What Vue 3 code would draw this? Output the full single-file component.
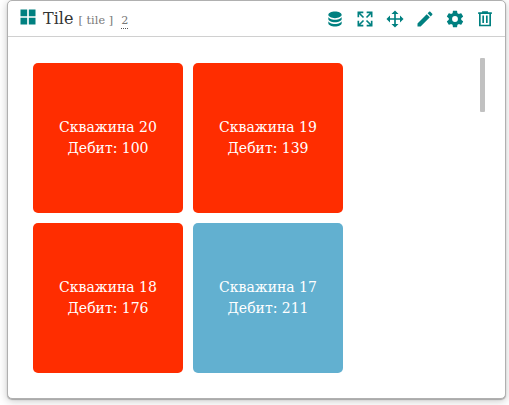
<script setup>
const actions = [
  { name: 'data', d: 'M12 3C7.58 3 4 4.79 4 7s3.58 4 8 4 8-1.79 8-4-3.58-4-8-4M4 9v3c0 2.21 3.58 4 8 4s8-1.79 8-4V9c0 2.21-3.58 4-8 4s-8-1.79-8-4m0 5v3c0 2.21 3.58 4 8 4s8-1.79 8-4v-3c0 2.21-3.58 4-8 4s-8-1.79-8-4z' },
  { name: 'expand', d: 'M9.5 13.09l1.41 1.41-4.5 4.5H10v2H3v-7h2v3.59l4.5-4.5m1.41-3.59L9.5 10.91 5 6.41V10H3V3h7v2H6.41l4.5 4.5m3.59 3.59l4.5 4.5V14h2v7h-7v-2h3.59l-4.5-4.5 1.41-1.41M13.09 9.5l4.5-4.5H14V3h7v7h-2V6.41l-4.5 4.5-1.41-1.41z' },
  { name: 'move', d: 'M13 6v5h5V7.75L22.25 12 18 16.25V13h-5v5h3.25L12 22.25 7.75 18H11v-5H6v3.25L1.75 12 6 7.75V11h5V6H7.75L12 1.75 16.25 6H13z' },
  { name: 'edit', d: 'M20.71 7.04c.39-.39.39-1.04 0-1.41l-2.34-2.34c-.37-.39-1.02-.39-1.41 0l-1.84 1.83 3.75 3.75M3 17.25V21h3.75L17.81 9.93l-3.75-3.75L3 17.25z' },
  { name: 'settings', d: 'M12 15.5A3.5 3.5 0 0 1 8.5 12 3.5 3.5 0 0 1 12 8.5a3.5 3.5 0 0 1 3.5 3.5 3.5 3.5 0 0 1-3.5 3.5m7.43-2.53c.04-.32.07-.64.07-.97s-.03-.66-.07-1l2.11-1.63c.19-.15.24-.42.12-.64l-2-3.46c-.12-.22-.39-.31-.61-.22l-2.49 1c-.52-.39-1.06-.73-1.69-.98l-.37-2.65A.506.506 0 0 0 14 2h-4c-.25 0-.46.18-.5.42l-.37 2.65c-.63.25-1.17.59-1.69.98l-2.49-1c-.22-.09-.49 0-.61.22l-2 3.46c-.13.22-.07.49.12.64L4.57 11c-.04.34-.07.67-.07 1s.03.65.07.97l-2.11 1.66c-.19.15-.25.42-.12.64l2 3.46c.12.22.39.3.61.22l2.49-1.01c.52.4 1.06.74 1.69.99l.37 2.65c.04.24.25.42.5.42h4c.25 0 .46-.18.5-.42l.37-2.65c.63-.26 1.17-.59 1.69-.99l2.49 1.01c.22.08.49 0 .61-.22l2-3.46c.12-.22.07-.49-.12-.64l-2.11-1.66z' },
  { name: 'delete', d: 'M8.5 2.6v1.2H3.8v2.1h1v14.9h14.4V5.9h1V3.8h-4.7V2.6H8.5M6.8 5.9h10.4v13H6.8V5.9m2 2v9h2v-9h-2m4.4 0v9h2v-9h-2z' },
]
const tiles = [
  { id: 20, value: 100 },
  { id: 19, value: 139 },
  { id: 18, value: 176 },
  { id: 17, value: 211, calm: true },
]
</script>

<template>
  <main class="page">
    <section class="panel">
      <header class="head">
        <svg class="icon logo" viewBox="0 0 24 24"><path d="M3 11h8V3H3m0 18h8v-8H3m10 8h8v-8h-8m0-10v8h8V3" /></svg>
        <span class="title">Tile</span>
        <span class="kind">[ tile ]</span>
        <span class="count">2</span>
        <nav class="actions">
          <svg v-for="a in actions" :key="a.name" class="icon" viewBox="0 0 24 24"><path :d="a.d" /></svg>
        </nav>
      </header>
      <div class="body">
        <div class="grid">
          <div v-for="t in tiles" :key="t.id" class="tile" :class="{ calm: t.calm }">
            <span>Скважина {{ t.id }}</span>
            <span>Дебит: {{ t.value }}</span>
          </div>
        </div>
        <div class="thumb"></div>
      </div>
    </section>
  </main>
</template>

<style>
body {
  background: #fff;
}
</style>

<style scoped>
.page {
  box-sizing: border-box;
  height: 405px;
  padding-left: 7px;
  overflow: hidden;
}
.panel {
  box-sizing: border-box;
  width: 499px;
  height: 399px;
  border: 1px solid #b0b0b0;
  border-radius: 5px;
  background: #fff;
  box-shadow: 0 1px 1px rgba(0, 0, 0, 0.25), 0 2px 8px rgba(0, 0, 0, 0.22);
  font-family: "DejaVu Serif", serif;
}
.head {
  box-sizing: border-box;
  display: flex;
  align-items: center;
  height: 36px;
  padding: 0 10px;
  border-bottom: 1px solid #d0d0d0;
}
.icon {
  display: block;
  flex: none;
  width: 20px;
  height: 20px;
  fill: #008080;
}
.logo {
  margin-bottom: 4px;
}
.title {
  margin-left: 5px;
  font-size: 16px;
  line-height: 20px;
  color: #333;
}
.kind {
  margin: 4px 0 0 5px;
  font-size: 11.2px;
  line-height: 14px;
  letter-spacing: 0.1px;
  color: #777;
}
.count {
  margin: 4px 0 0 8px;
  border-bottom: 1px dotted #555;
  font-size: 11.2px;
  line-height: 15px;
  color: #777;
}
.actions {
  display: flex;
  gap: 10px;
  margin-left: auto;
}
.body {
  display: flex;
  align-items: flex-start;
  justify-content: space-between;
  padding: 21px 20px 0 25px;
}
.grid {
  display: grid;
  grid-template-columns: 150px 150px;
  gap: 10px;
  padding-top: 5px;
}
.tile {
  display: flex;
  flex-direction: column;
  align-items: center;
  justify-content: center;
  height: 150px;
  border-radius: 5px;
  background: #ff2d00;
  color: #fff;
  font-size: 14px;
  line-height: 21px;
}
.calm {
  background: #62b0d0;
}
.thumb {
  width: 5px;
  height: 54px;
  border-radius: 1px;
  background: #c1c1c1;
}
</style>
